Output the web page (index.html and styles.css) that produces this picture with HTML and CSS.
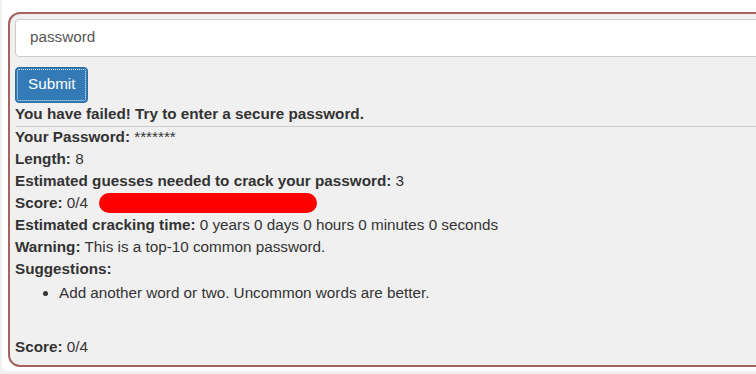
FILE: index.html
```html
<!DOCTYPE html>
<html>
<head>
<meta charset="utf-8">
<link rel="stylesheet" href="styles.css">
</head>
<body>
<div class="card">
  <form class="box">
    <input class="pw-input" type="text" value="password">
    <div class="btn-row"><button type="button" class="btn">Submit</button></div>
    <div class="line"><b>You have failed! Try to enter a secure password.</b></div>
    <div class="rule"></div>
    <div class="line"><b>Your Password:</b> *******</div>
    <div class="line"><b>Length:</b> 8</div>
    <div class="line"><b>Estimated guesses needed to crack your password:</b> 3</div>
    <div class="line"><b>Score:</b> 0/4 <span class="bar"></span></div>
    <div class="line"><b>Estimated cracking time:</b> 0 years 0 days 0 hours 0 minutes 0 seconds</div>
    <div class="line"><b>Warning:</b> This is a top-10 common password.</div>
    <div class="line"><b>Suggestions:</b></div>
    <ul class="suggest">
      <li>Add another word or two. Uncommon words are better.</li>
    </ul>
    <div class="line"><b>Score:</b> 0/4</div>
  </form>
</div>
</body>
</html>
```
FILE: styles.css
```css
html, body {
  margin: 0;
  padding: 0;
  overflow: hidden;
  background: #f1f1f4;
  font-family: "Liberation Sans", Arial, sans-serif;
  font-size: 15.25px;
  color: #333;
}
.card {
  width: 1000px;
  margin: -10px 0 0 2px;
  padding: 22px 0 4px 6px;
  background: #fff;
  border-radius: 6px;
}
.box {
  width: 960px;
  border: 2px solid #a6625f;
  border-radius: 12px;
  background: #f0f0f0;
  padding: 5px 5px 7px 5px;
  margin: 0;
}
.pw-input {
  display: block;
  box-sizing: border-box;
  width: 940px;
  height: 38px;
  padding: 4px 14px 8px 14px;
  border: 1px solid #ccc;
  border-radius: 4px;
  background: #fff;
  color: #555;
  font-family: "Liberation Sans", Arial, sans-serif;
  font-size: 15.25px;
  margin: 0;
}
.btn-row {
  margin-top: 10px;
  height: 36px;
}
.btn {
  box-sizing: border-box;
  height: 36px;
  padding: 5px 12px 7px 12px;
  border: 1px solid #2e6da4;
  border-radius: 4px;
  background: #337ab7;
  color: #fff;
  font-family: "Liberation Sans", Arial, sans-serif;
  font-size: 15.25px;
  line-height: 22px;
  outline: 1px dotted rgba(255, 255, 255, 0.85);
  outline-offset: -3px;
}
.line {
  line-height: 22px;
}
.rule {
  height: 1px;
  background: #ccc;
  margin: 1px 0 -1px 1px;
}
.bar {
  display: inline-block;
  width: 218px;
  height: 20px;
  border-radius: 10px;
  background: #ff0000;
  vertical-align: middle;
  margin-left: 7px;
  position: relative;
  top: -1px;
}
.suggest {
  margin: 2px 0 32px 0;
  padding-left: 44px;
  line-height: 22px;
}
```
